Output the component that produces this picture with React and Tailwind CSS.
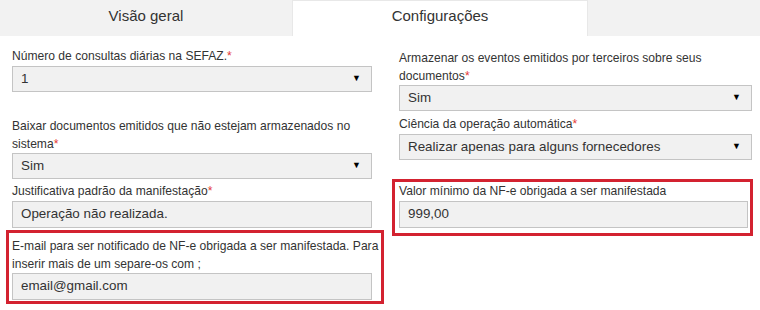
const Req = () => <span className="text-[#e53935]">*</span>;

function Label({ children }) {
  return <div className="text-[12.1px] leading-[18px] text-[#333]">{children}</div>;
}

function Select({ value }) {
  return (
    <div className="flex h-[26px] w-full items-center justify-between border border-[#c4c4c4] bg-[#f1f1f1] pl-[8px] pr-[10px] text-[13.4px] text-[#333]">
      <span>{value}</span>
      <span className="text-[9px] text-black">▼</span>
    </div>
  );
}

function Input({ value }) {
  return (
    <div className="flex h-[27px] w-full items-center border border-[#c4c4c4] bg-[#f1f1f1] pl-[8px] text-[13.4px] text-[#333]">
      {value}
    </div>
  );
}

export default function App() {
  return (
    <div className="h-[310px] w-[760px] bg-white font-['Liberation_Sans',Arial,sans-serif]">
      <div className="flex h-[36px]">
        <div className="flex w-[292px] items-center justify-center bg-[#f2f2f2] pb-[4px] text-[15px] text-[#333]">
          Visão geral
        </div>
        <div className="flex w-[296px] items-center justify-center border-x border-t border-[#e8e8e8] bg-white pb-[4px] text-[15px] text-[#333]">
          Configurações
        </div>
        <div className="flex-1 bg-[#f2f2f2]" />
      </div>

      <div className="flex">
        <div className="flex w-[392px] flex-col pl-[6px]">
          <div className="pl-[6px] pt-[11px]">
            <Label>
              Número de consultas diárias na SEFAZ.<Req />
            </Label>
            <div className="mt-px w-[360px]">
              <Select value="1" />
            </div>
          </div>
          <div className="mt-[25px] pl-[6px]">
            <div className="w-[366px]">
              <Label>
                Baixar documentos emitidos que não estejam armazenados no sistema<Req />
              </Label>
            </div>
            <div className="w-[360px]">
              <Select value="Sim" />
            </div>
          </div>
          <div className="mt-[3px] pl-[6px]">
            <Label>
              Justificativa padrão da manifestação<Req />
            </Label>
            <div className="mt-px w-[360px]">
              <Input value="Operação não realizada." />
            </div>
          </div>
          <div className="mt-[2px] w-[378px] border-[3px] border-[#d32230] pb-[1px] pl-[3px] pt-[4px]">
            <div className="w-[370px]">
              <Label>
                E-mail para ser notificado de NF-e obrigada a ser manifestada. Para inserir mais de um separe-os com ;
              </Label>
            </div>
            <div className="w-[360px]">
              <Input value="email@gmail.com" />
            </div>
          </div>
        </div>

        <div className="flex w-[361px] flex-col">
          <div className="pl-[7px] pt-[13px]">
            <div className="w-[320px]">
              <Label>
                Armazenar os eventos emitidos por terceiros sobre seus documentos<Req />
              </Label>
            </div>
            <div className="w-[353px]">
              <Select value="Sim" />
            </div>
          </div>
          <div className="mt-[4px] pl-[7px]">
            <Label>
              Ciência da operação automática<Req />
            </Label>
            <div className="mt-px w-[353px]">
              <Select value="Realizar apenas para alguns fornecedores" />
            </div>
          </div>
          <div className="mt-[19px] border-[3px] border-[#d32230] pb-[5px] pl-[4px] pr-[2px]">
            <Label>Valor mínimo da NF-e obrigada a ser manifestada</Label>
            <div className="mt-px">
              <Input value="999,00" />
            </div>
          </div>
        </div>
      </div>
    </div>
  );
}
